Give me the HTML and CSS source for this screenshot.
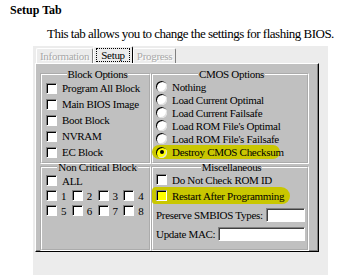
FILE: index.html
```html
<!DOCTYPE html>
<html lang="en">

<head>
    <meta charset="UTF-8">
    <meta name="viewport" content="width=device-width, initial-scale=1.0">
    <title>Setup Tab</title>
    <link rel="stylesheet" href="styles.css">
</head>

<body>
    <h1 class="title">Setup Tab</h1>
    <p class="intro">This tab allows you to change the settings for flashing BIOS.</p>
    <div class="dialog">
        <div class="tabs">
            <span class="tab off">Information</span>
            <span class="tab on"><span class="focus">Setup</span></span>
            <span class="tab off">Progress</span>
        </div>
        <div class="panel">
            <div class="col">
                <fieldset class="grp block">
                    <legend>Block Options</legend>
                    <div class="row"><span class="box"></span>Program All Block</div>
                    <div class="row"><span class="box"></span>Main BIOS Image</div>
                    <div class="row"><span class="box"></span>Boot Block</div>
                    <div class="row"><span class="box"></span>NVRAM</div>
                    <div class="row"><span class="box"></span>EC Block</div>
                </fieldset>
                <fieldset class="grp noncrit">
                    <legend>Non Critical Block</legend>
                    <div class="row"><span class="box"></span>ALL</div>
                    <div class="row nums">
                        <span class="num"><span class="box"></span>1</span>
                        <span class="num"><span class="box"></span>2</span>
                        <span class="num"><span class="box"></span>3</span>
                        <span class="num"><span class="box"></span>4</span>
                    </div>
                    <div class="row nums">
                        <span class="num"><span class="box"></span>5</span>
                        <span class="num"><span class="box"></span>6</span>
                        <span class="num"><span class="box"></span>7</span>
                        <span class="num"><span class="box"></span>8</span>
                    </div>
                </fieldset>
            </div>
            <div class="col">
                <fieldset class="grp cmos">
                    <legend>CMOS Options</legend>
                    <div class="opt"><span class="radio"></span>Nothing</div>
                    <div class="opt"><span class="radio"></span>Load Current Optimal</div>
                    <div class="opt"><span class="radio"></span>Load Current Failsafe</div>
                    <div class="opt"><span class="radio"></span>Load ROM File's Optimal</div>
                    <div class="opt"><span class="radio"></span>Load ROM File's Failsafe</div>
                    <div class="opt mark"><span class="radio picked"></span>Destroy CMOS Checksum</div>
                </fieldset>
                <fieldset class="grp misc">
                    <legend>Miscellaneous</legend>
                    <div class="row first"><span class="box"></span>Do Not Check ROM ID</div>
                    <div class="row mark brush"><span class="box lit"></span>Restart After Programming</div>
                    <div class="field">Preserve SMBIOS Types:<span class="input"></span></div>
                    <div class="field">Update MAC:<span class="input"></span></div>
                </fieldset>
            </div>
        </div>
    </div>
</body>

</html>
```

FILE: styles.css
```css
html,
body {
    margin: 0;
    padding: 0;
    background: #fff;
    color: #000;
    font-family: "Liberation Serif", serif;
}

.title {
    margin: 3px 0 0 10px;
    font-size: 12px;
    line-height: 14px;
    font-weight: bold;
}

.intro {
    margin: 9px 0 0 47px;
    font-size: 13px;
    line-height: 16px;
    letter-spacing: -0.5px;
    white-space: nowrap;
}

.dialog {
    margin: 4px 0 0 33px;
    width: 295px;
    height: 229px;
    background: #ececec;
    font-size: 11px;
    letter-spacing: -0.3px;
}

.tabs {
    display: flex;
    height: 17px;
    padding-left: 3px;
}

.tab {
    display: flex;
    align-items: center;
    padding: 0 3px;
    border-top: 1px solid #fff;
    border-left: 1px solid #fff;
    border-right: 1px solid #808080;
    border-radius: 2px 2px 0 0;
    box-sizing: border-box;
}

.tab.off {
    color: #a8a8a8;
    text-shadow: 1px 1px 0 #fff;
    margin-top: 2px;
}

.tab.on {
    padding: 1px 2px;
    border-right-color: #000;
}

.focus {
    border: 1px dotted #000;
    padding: 0 4px;
    line-height: 12px;
}

.panel {
    display: flex;
    margin-left: 2px;
    width: 284px;
    height: 189px;
    box-sizing: border-box;
    background: #c0c0c0;
    border: 1px solid;
    border-color: #fff #000 #000 #fff;
    box-shadow: inset -1px -1px #808080;
    padding: 4px 9px 0 4px;
}

.col {
    display: flex;
    flex-direction: column;
}

.col:first-child {
    width: 111px;
}

.col:last-child {
    width: 158px;
}

.grp {
    margin: 0;
    padding: 0 0 0 4px;
    border: 2px groove #fff;
    min-width: 0;
}

.grp legend {
    margin: 0 auto;
    padding: 0 1px;
    line-height: 12px;
}

.block,
.cmos {
    height: 94px;
}

.noncrit,
.misc {
    margin-top: -3px;
    height: 87px;
}

.row,
.opt {
    display: flex;
    align-items: center;
    gap: 5px;
    white-space: nowrap;
}

.row {
    height: 16px;
}

.noncrit .row {
    height: 15px;
}

.opt {
    height: 13px;
}

.box {
    flex: none;
    width: 11px;
    height: 11px;
    box-sizing: border-box;
    background: #fff;
    border: 1px solid;
    border-color: #808080 #fff #fff #808080;
    box-shadow: inset 1px 1px #000;
}

.box.lit {
    background: #ffff00;
}

.radio {
    flex: none;
    width: 11px;
    height: 11px;
    box-sizing: border-box;
    border-radius: 50%;
    background: #fff;
    box-shadow: inset 1px 1px #000, inset -1px -1px #dfdfdf;
    display: flex;
    align-items: center;
    justify-content: center;
}

.radio.picked {
    background: #ffff00;
}

.radio.picked::after {
    content: "";
    width: 4px;
    height: 4px;
    border-radius: 50%;
    background: #000;
}

.cmos,
.misc {
    padding-left: 3px;
}

.mark {
    background: #c9c700;
    margin-left: -4px;
    padding-left: 4px;
    border-radius: 7px;
}

.cmos .mark {
    width: 124px;
    height: 14px;
}

.misc .first {
    height: 13px;
}

.brush {
    width: 134px;
    height: 17px;
    margin-top: 1px;
    border-radius: 4px 9px 8px 3px;
}

.nums {
    gap: 0;
}

.num {
    display: flex;
    align-items: center;
    gap: 4px;
    width: 26px;
}

.field {
    display: flex;
    align-items: center;
    gap: 3px;
    white-space: nowrap;
    height: 14px;
    margin-top: 4px;
}

.field + .field {
    margin-top: 5px;
}

.input {
    flex: 1;
    height: 14px;
    margin-right: 2px;
    box-sizing: border-box;
    background: #fff;
    border: 1px solid;
    border-color: #808080 #fff #fff #808080;
    box-shadow: inset 1px 1px #404040;
}
```
